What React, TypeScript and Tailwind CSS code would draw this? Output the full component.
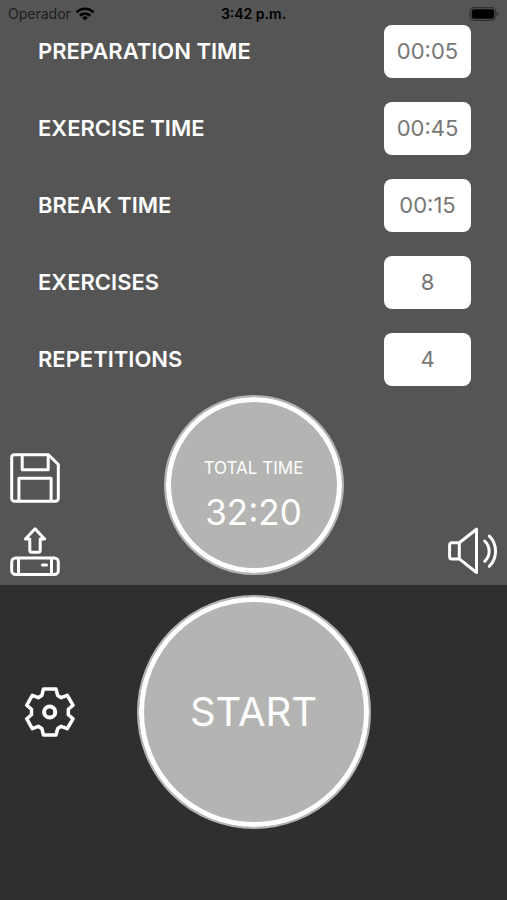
import { useState } from "react";

const FIELDS = [
  { id: "preparation", label: "PREPARATION TIME", initial: "00:05" },
  { id: "exercise", label: "EXERCISE TIME", initial: "00:45" },
  { id: "break", label: "BREAK TIME", initial: "00:15" },
  { id: "exercises", label: "EXERCISES", initial: "8" },
  { id: "repetitions", label: "REPETITIONS", initial: "4" },
];

function StatusBar() {
  return (
    <header className="grid h-[25px] grid-cols-[1fr_auto_1fr] items-center px-2 pt-[2px] text-sm leading-5 text-black">
      <div className="flex items-center gap-1">
        <span className="text-[#1c1c1c]">Operador</span>
        <svg viewBox="0 0 20 14" className="h-[14px] w-5" fill="none" stroke="currentColor" strokeWidth="2.7" aria-hidden="true">
          <path d="M1.5 5.2a12.2 12.2 0 0 1 17 0" />
          <path d="M4.8 8.7a7.5 7.5 0 0 1 10.4 0" />
          <path d="M10 13.6 7.1 10.7a4.2 4.2 0 0 1 5.8 0z" fill="currentColor" stroke="none" />
        </svg>
      </div>
      <span className="font-semibold">3:42 p.m.</span>
      <svg viewBox="0 0 30 14" className="h-[14px] w-[30px] justify-self-end" aria-hidden="true">
        <rect x="1.2" y="0.7" width="25.6" height="12.6" rx="4" fill="none" stroke="#303030" strokeWidth="1.2" />
        <rect x="2.8" y="2.3" width="22.4" height="9.4" rx="2.3" fill="#000" />
        <path d="M28.2 4.8a2.4 2.4 0 0 1 0 4.4z" fill="#303030" />
      </svg>
    </header>
  );
}

function TimeField({ id, label, initial }: { id: string; label: string; initial: string }) {
  const [value, setValue] = useState(initial);
  return (
    <div className="flex items-center justify-between">
      <label htmlFor={id} className="pb-[2px] text-[22px] leading-7 font-semibold text-white">
        {label}
      </label>
      <input
        id={id}
        value={value}
        onChange={(e) => setValue(e.target.value)}
        className="h-[53px] w-[87px] rounded-lg bg-white pb-[2px] text-center text-[22px] leading-7 text-[#777777]"
      />
    </div>
  );
}

function SaveIcon() {
  return (
    <svg viewBox="0 0 50 50" className="size-[50px]" fill="none" stroke="currentColor" strokeWidth="3" strokeLinejoin="round" aria-hidden="true">
      <path d="M4.5 1.8H38.5L48.3 11.5V45.5a2.8 2.8 0 0 1-2.8 2.8H4.5a2.8 2.8 0 0 1-2.8-2.8V4.5a2.8 2.8 0 0 1 2.8-2.7z" />
      <path d="M12.2 2v14.8h26V2M8.9 48V25.2h32.2V48" />
    </svg>
  );
}

function UploadIcon() {
  return (
    <svg viewBox="0 0 50 50" className="size-[50px]" fill="none" stroke="currentColor" strokeWidth="3" strokeLinejoin="round" aria-hidden="true">
      <path d="M25 1.8 34.6 12H30.2V23.2a2 2 0 0 1-2 2h-6.4a2 2 0 0 1-2-2V12H15.4z" />
      <rect x="1.7" y="31" width="46.6" height="16.5" rx="4" />
      <path d="M8.5 31v16.5M41.5 31v16.5" />
      <path d="M32.5 38h4" strokeLinecap="round" />
    </svg>
  );
}

function SoundIcon() {
  return (
    <svg viewBox="0 0 50 50" className="size-[50px] overflow-visible" fill="none" stroke="currentColor" strokeWidth="3" strokeLinejoin="round" strokeLinecap="round" aria-hidden="true">
      <path d="M12.3 15.7V31.9H4.8a2.2 2.2 0 0 1-2.2-2.200V17.900a2.200 2.200 0 0 1 2.200-2.200zL29.500 2.200V45.500L12.300 31.900" />
      <path d="M37.700 14a13.800 13.800 0 0 1 0 20.300M42.300 9a21.500 21.500 0 0 1 0 30.300" />
    </svg>
  );
}

function GearIcon() {
  return (
    <svg viewBox="0 0 50 50" className="size-[50px]" fill="none" stroke="currentColor" strokeWidth="3.500" strokeLinejoin="round" aria-hidden="true">
      <path d="M18.500 2H31L32.700 8.500 36.200 10.700 42.300 8.300 48 18.200 43.300 22.300V27.700L48 31.800 42.300 41.700 36.200 39.300 32.700 41.500 31 48H18.500L16.800 41.500 13.300 39.300 7.300 41.700 1.800 31.800 6.500 27.700V22.300L1.800 18.200 7.300 8.300 13.300 10.700 16.800 8.500z" />
      <circle cx="24.700" cy="25" r="5.600" strokeWidth="4" />
    </svg>
  );
}

export default function App() {
  return (
    <div className="flex min-h-screen flex-col bg-[#2f2f2f] font-['Inter','Liberation_Sans',sans-serif] text-white">
      <div className="bg-[#555555] pb-2">
        <StatusBar />
        <form className="flex flex-col gap-6 pr-9 pl-[38px]">
          {FIELDS.map((field) => (
            <TimeField key={field.id} {...field} />
          ))}
        </form>
        <div className="grid grid-cols-[1fr_auto_1fr] items-end px-[10px] pt-[9px]">
          <div className="flex flex-col items-start gap-6">
            <button type="button" aria-label="Save">
              <SaveIcon />
            </button>
            <button type="button" aria-label="Load">
              <UploadIcon />
            </button>
          </div>
          <div className="mb-[2px] flex size-[180px] flex-col items-center rounded-full border-2 border-[#b4b4b2] bg-[#b4b4b2] pt-[59px] shadow-[inset_0_0_0_5px_white]">
            <span className="text-[17px] leading-6">TOTAL TIME</span>
            <span className="mt-3 text-[35px] leading-10">32:20</span>
          </div>
          <button type="button" aria-label="Sound" className="justify-self-end">
            <SoundIcon />
          </button>
        </div>
      </div>
      <main className="grid grid-cols-[1fr_auto_1fr] items-center px-[25px] pt-[10px]">
        <button type="button" aria-label="Settings" className="justify-self-start">
          <GearIcon />
        </button>
        <button
          type="button"
          className="size-[234px] rounded-full border-2 border-[#b4b4b2] bg-[#b4b4b2] text-[40px] leading-[50px] shadow-[inset_0_0_0_5px_white]"
        >
          START
        </button>
      </main>
    </div>
  );
}
